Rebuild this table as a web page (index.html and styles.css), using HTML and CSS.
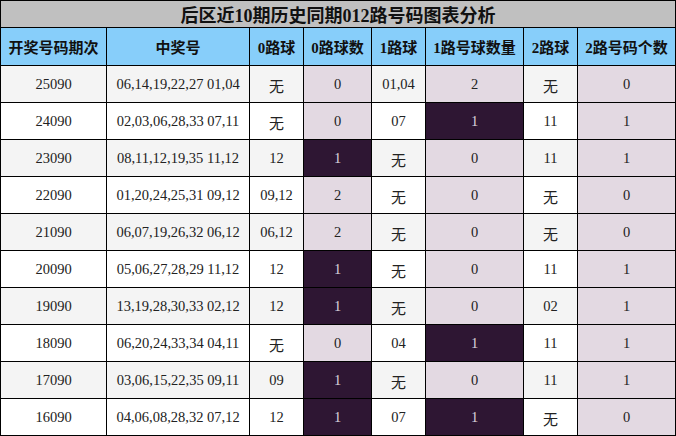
FILE: index.html
```html
<!DOCTYPE html>
<html lang="zh">
<head>
<meta charset="utf-8">
<link rel="stylesheet" href="styles.css">
</head>
<body>
<div class="grid">
  <div class="title">后区近10期历史同期012路号码图表分析</div>
  <div class="hd">开奖号码期次</div><div class="hd">中奖号</div><div class="hd">0路球</div><div class="hd">0路球数</div><div class="hd">1路球</div><div class="hd">1路号球数量</div><div class="hd">2路球</div><div class="hd">2路号码个数</div>

  <div class="c alt">25090</div><div class="c alt">06,14,19,22,27 01,04</div><div class="c alt cj">无</div><div class="c n">0</div><div class="c alt">01,04</div><div class="c n">2</div><div class="c alt cj">无</div><div class="c n">0</div>
  <div class="c">24090</div><div class="c">02,03,06,28,33 07,11</div><div class="c cj">无</div><div class="c n">0</div><div class="c">07</div><div class="c n hi">1</div><div class="c">11</div><div class="c n">1</div>
  <div class="c alt">23090</div><div class="c alt">08,11,12,19,35 11,12</div><div class="c alt">12</div><div class="c n hi">1</div><div class="c alt cj">无</div><div class="c n">0</div><div class="c alt">11</div><div class="c n">1</div>
  <div class="c">22090</div><div class="c">01,20,24,25,31 09,12</div><div class="c">09,12</div><div class="c n">2</div><div class="c cj">无</div><div class="c n">0</div><div class="c cj">无</div><div class="c n">0</div>
  <div class="c alt">21090</div><div class="c alt">06,07,19,26,32 06,12</div><div class="c alt">06,12</div><div class="c n">2</div><div class="c alt cj">无</div><div class="c n">0</div><div class="c alt cj">无</div><div class="c n">0</div>
  <div class="c">20090</div><div class="c">05,06,27,28,29 11,12</div><div class="c">12</div><div class="c n hi">1</div><div class="c cj">无</div><div class="c n">0</div><div class="c">11</div><div class="c n">1</div>
  <div class="c alt">19090</div><div class="c alt">13,19,28,30,33 02,12</div><div class="c alt">12</div><div class="c n hi">1</div><div class="c alt cj">无</div><div class="c n">0</div><div class="c alt">02</div><div class="c n">1</div>
  <div class="c">18090</div><div class="c">06,20,24,33,34 04,11</div><div class="c cj">无</div><div class="c n">0</div><div class="c">04</div><div class="c n hi">1</div><div class="c">11</div><div class="c n">1</div>
  <div class="c alt">17090</div><div class="c alt">03,06,15,22,35 09,11</div><div class="c alt">09</div><div class="c n hi">1</div><div class="c alt cj">无</div><div class="c n">0</div><div class="c alt">11</div><div class="c n">1</div>
  <div class="c">16090</div><div class="c">04,06,08,28,32 07,12</div><div class="c">12</div><div class="c n hi">1</div><div class="c">07</div><div class="c n hi">1</div><div class="c cj">无</div><div class="c n">0</div>
</div>
</body>
</html>
```
FILE: styles.css
```css
html, body {
  margin: 0;
  padding: 0;
  background: #ffffff;
}
.grid {
  width: 676px;
  box-sizing: border-box;
  display: grid;
  grid-template-columns: 105px 142px 53px 67px 53px 97px 53px 97px;
  grid-template-rows: 26px 37px repeat(10, 36px);
  gap: 1px;
  padding: 1px;
  background: #000000;
  font-family: "Liberation Serif", "Noto Sans CJK SC", serif;
}
.title {
  grid-column: 1 / -1;
  background: #c0c0c0;
  font-weight: bold;
  font-size: 18px;
  color: #111111;
  display: flex;
  align-items: center;
  justify-content: center;
}
.hd {
  background: #87cefa;
  font-weight: bold;
  font-size: 15px;
  color: #111111;
  display: flex;
  align-items: center;
  justify-content: center;
}
.c {
  background: #ffffff;
  font-size: 14.5px;
  color: #222222;
  display: flex;
  align-items: center;
  justify-content: center;
}
.c.alt {
  background: #f4f4f4;
}
.c.cj {
  font-size: 15px;
  padding-top: 2px;
}
.c.n {
  background: #e3d9e2;
}
.c.n.hi {
  background: #2e1633;
  color: #d8d0da;
}
```
